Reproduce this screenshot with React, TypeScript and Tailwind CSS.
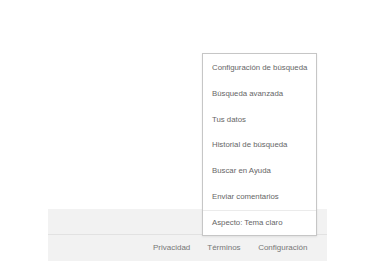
import React from 'react';

const menuItems = [
  'Configuración de búsqueda',
  'Búsqueda avanzada',
  'Tus datos',
  'Historial de búsqueda',
  'Buscar en Ayuda',
  'Enviar comentarios',
];

const footerLinks = ['Privacidad', 'Términos', 'Configuración'];

const App: React.FC = () => {
  return (
    <div
      className="relative h-[261px] w-[375px] overflow-hidden bg-white flex flex-col"
      style={{ fontFamily: '"Liberation Sans", Arial, sans-serif' }}
    >
      <div className="flex-1" />

      <footer className="mx-12 bg-[#f2f2f2]">
        <div className="h-[26px] border-b border-[#e2e2e2]" />
        <div className="h-[26px] flex items-center justify-end pr-[11px] text-[8px] text-[#777]">
          <a href="#" className="pr-[8.5px]">{footerLinks[0]}</a>
          <a href="#" className="px-[8.5px]">{footerLinks[1]}</a>
          <a href="#" className="pl-[9px] pr-[8.5px]">{footerLinks[2]}</a>
        </div>
      </footer>

      <div className="absolute left-[202px] top-[53px] w-[115px] bg-white border border-[#c6c6c6] shadow-[0_1px_2px_rgba(0,0,0,0.08)] pt-[1px] text-[7.8px] text-[#666]">
        {menuItems.map((item) => (
          <div key={item} className="h-[25.8px] flex items-center pl-[9px] whitespace-nowrap">
            {item}
          </div>
        ))}
        <div className="border-t border-[#ebebeb]">
          <div className="h-[24px] flex items-center pl-[9px] whitespace-nowrap">
            Aspecto: Tema claro
          </div>
        </div>
      </div>
    </div>
  );
};

export default App;
